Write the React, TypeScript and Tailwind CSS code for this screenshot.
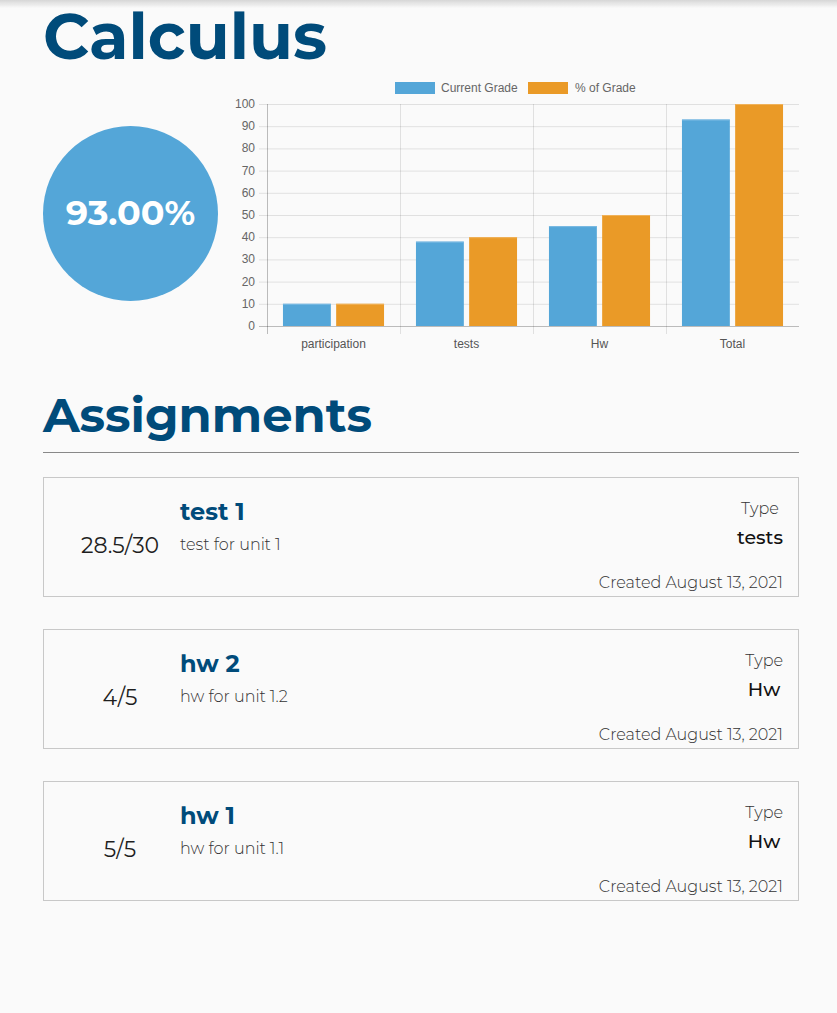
import React from "react";

const BLUE = "#54a6d8";
const ORANGE = "#ea9a27";

const cats = [
  { label: "participation", a: 10, b: 10 },
  { label: "tests", a: 38, b: 40 },
  { label: "Hw", a: 45, b: 50 },
  { label: "Total", a: 93, b: 100 },
];

const X0 = 267;
const X1 = 799;
const Y0 = 326;
const YT = 104;
const CW = (X1 - X0) / 4;
const yOf = (v: number) => Y0 - ((Y0 - YT) * v) / 100;

function Chart() {
  const ticks = [0, 10, 20, 30, 40, 50, 60, 70, 80, 90, 100];
  return (
    <svg width={574} height={290} viewBox="225 70 574 290" className="block shrink-0">
      {/* legend */}
      <rect x={395} y={82} width={40} height={12} fill={BLUE} />
      <text x={441} y={92} fontSize={12} fill="#666" fontFamily="'Liberation Sans', Arial, sans-serif">
        Current Grade
      </text>
      <rect x={528} y={82} width={40} height={12} fill={ORANGE} />
      <text x={575} y={92} fontSize={12} fill="#666" fontFamily="'Liberation Sans', Arial, sans-serif">
        % of Grade
      </text>
      {/* horizontal grid */}
      {ticks.map((t) => (
        <g key={t}>
          <line
            x1={259}
            x2={X1}
            y1={yOf(t) + 0.5}
            y2={yOf(t) + 0.5}
            stroke={t === 0 ? "rgba(0,0,0,0.25)" : "rgba(0,0,0,0.1)"}
            strokeWidth={1}
          />
          <text
            x={255}
            y={yOf(t) + 4}
            fontSize={12}
            fill="#666"
            textAnchor="end"
            fontFamily="'Liberation Sans', Arial, sans-serif"
          >
            {t}
          </text>
        </g>
      ))}
      {/* vertical grid */}
      {[0, 1, 2, 3].map((i) => (
        <line
          key={i}
          x1={X0 + CW * i + 0.5}
          x2={X0 + CW * i + 0.5}
          y1={YT}
          y2={334}
          stroke={i === 0 ? "rgba(0,0,0,0.25)" : "rgba(0,0,0,0.1)"}
          strokeWidth={1}
        />
      ))}
      {/* bars */}
      {cats.map((c, i) => {
        const cx = X0 + CW * i + CW / 2;
        const bw = (CW * 0.8) / 2;
        const w = bw * 0.9;
        const ax = cx - bw + (bw - w) / 2;
        const bx = cx + (bw - w) / 2;
        return (
          <g key={c.label}>
            <rect x={ax} y={yOf(c.a)} width={w} height={Y0 - yOf(c.a)} fill={BLUE} />
            <rect x={ax} y={yOf(c.a)} width={w} height={1} fill="#7cbbe3" />
            <rect x={bx} y={yOf(c.b)} width={w} height={Y0 - yOf(c.b)} fill={ORANGE} />
            <rect x={bx} y={yOf(c.b)} width={w} height={1} fill="#f0b25a" />
            <text
              x={cx}
              y={348}
              fontSize={12}
              fill="#555"
              textAnchor="middle"
              fontFamily="'Liberation Sans', Arial, sans-serif"
            >
              {c.label}
            </text>
          </g>
        );
      })}
    </svg>
  );
}

type Item = { score: string; title: string; desc: string; type: string };

const items: Item[] = [
  { score: "28.5/30", title: "test 1", desc: "test for unit 1", type: "tests" },
  { score: "4/5", title: "hw 2", desc: "hw for unit 1.2", type: "Hw" },
  { score: "5/5", title: "hw 1", desc: "hw for unit 1.1", type: "Hw" },
];

function Card({ it }: { it: Item }) {
  return (
    <div className="flex h-[120px] border border-[#c8c8c8] pl-4 pr-[15px]">
      <div className="w-[120px] shrink-0 pt-[54px] text-center text-[22px] leading-[28px] text-[#1e1e1e]">
        {it.score}
      </div>
      <div className="flex-1 pt-[20px]">
        <div className="text-[24px] leading-[28px] font-bold text-[#004b7a]">{it.title}</div>
        <div className="mt-[9px] text-[16px] leading-[20px] font-light text-[#333]">{it.desc}</div>
      </div>
      <div className="flex flex-col items-end pt-[21px]">
        <div className="flex flex-col items-center">
          <div className="text-[16px] leading-[20px] font-light text-[#333]">Type</div>
          <div className="mt-[7px] text-[19px] leading-[24px] font-medium text-[#111]">{it.type}</div>
        </div>
        <div className="mt-[23px] text-[16px] leading-[20px] font-light text-[#333]">
          Created August 13, 2021
        </div>
      </div>
    </div>
  );
}

export default function App() {
  return (
    <div className="min-h-[1013px] bg-[#fafafa] font-['Montserrat','Inter',sans-serif]">
      <div className="fixed inset-x-0 top-0 h-2 bg-linear-to-b from-[#d6d6d6] to-transparent" />
      <div className="ml-[43px] w-[756px]">
        <h1 className="pt-[1px] text-[64px] leading-[70px] font-bold text-[#004b7a]">Calculus</h1>
        <div className="-mt-px flex items-start gap-[7px]">
          <div className="mt-[56px] flex h-[175px] w-[175px] shrink-0 items-center justify-center rounded-full bg-[#54a6d8] text-[35px] font-bold text-white">
            93.00%
          </div>
          <Chart />
        </div>
        <h2 className="mt-[31px] border-b border-[#888] pb-[13px] text-[48px] leading-none font-bold text-[#004b7a]">
          Assignments
        </h2>
        <div className="mt-6 flex flex-col gap-8">
          {items.map((it) => (
            <Card key={it.title} it={it} />
          ))}
        </div>
      </div>
    </div>
  );
}
